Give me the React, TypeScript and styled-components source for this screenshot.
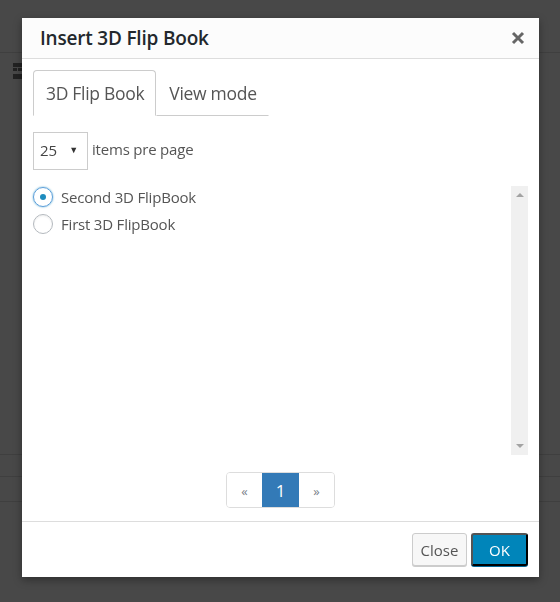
import React, { useState } from "react";
import styled, { createGlobalStyle } from "styled-components";

const GlobalStyle = createGlobalStyle`
  html, body {
    margin: 0;
    padding: 0;
    width: 560px;
    height: 602px;
    overflow: hidden;
    background: #484848;
    font-family: "Open Sans", "Noto Sans", sans-serif;
  }
  * { box-sizing: border-box; }
`;

// the admin page behind the modal overlay
const Backdrop = styled.div`
  width: 560px;
  height: 602px;
  background: #484848;
  display: flex;
  flex-direction: column;
`;

const BackRow = styled.div<{ $h: number; $line?: boolean }>`
  height: ${(p) => p.$h}px;
  border-top: 1px solid ${(p) => (p.$line ? "#3f3f3f" : "transparent")};
  flex-shrink: 0;
  padding: 10px 0 0 13px;
`;

const BackIcon = styled.div`
  width: 9px;
  height: 16px;
  border-top: 4px solid #222;
  border-bottom: 5px solid #222;
  position: relative;
  &::after {
    content: "";
    position: absolute;
    left: 0;
    right: 0;
    top: 1px;
    height: 3px;
    background: linear-gradient(90deg, #222 40%, transparent 40%, transparent 60%, #222 60%);
  }
`;

const Modal = styled.div`
  position: fixed;
  left: 22px;
  top: 18px;
  width: 517px;
  height: 559px;
  background: #fff;
  box-shadow: 0 3px 8px rgba(0, 0, 0, 0.35);
  display: flex;
  flex-direction: column;
`;

const Header = styled.div`
  height: 41px;
  background: #fcfcfc;
  border-bottom: 1px solid #dddddd;
  display: flex;
  align-items: center;
  justify-content: space-between;
  padding: 0 14px 0 18px;
`;

const Title = styled.h1`
  margin: 0;
  font-size: 19px;
  font-weight: 600;
  color: #23282d;
  letter-spacing: -0.2px;
`;

const CloseX = styled.button`
  border: 0;
  background: none;
  padding: 0;
  width: 14px;
  height: 14px;
  cursor: pointer;
  display: flex;
`;

const Body = styled.div`
  flex: 1;
  padding: 11px 11px 0;
  display: flex;
  flex-direction: column;
`;

const Tabs = styled.div`
  display: flex;
  align-self: flex-start;
`;

const Tab = styled.div<{ $active?: boolean }>`
  height: 46px;
  padding: 0 11px 0 12px;
  display: flex;
  align-items: center;
  font-size: 17.5px;
  color: #555;
  letter-spacing: -0.3px;
  border: 1px solid ${(p) => (p.$active ? "#ccc" : "transparent")};
  border-bottom: 1px solid ${(p) => (p.$active ? "transparent" : "#ccc")};
  border-radius: ${(p) => (p.$active ? "4px 4px 0 0" : "0")};
  cursor: pointer;
`;

const PerPage = styled.div`
  margin-top: 16px;
  display: flex;
  align-items: center;
  gap: 4px;
  font-size: 15px;
  color: #555;
  letter-spacing: -0.2px;
`;

const PerPageLabel = styled.span`
  padding-bottom: 4px;
`;

const Select = styled.div`
  width: 55px;
  height: 38px;
  border: 1px solid #ccc;
  display: flex;
  align-items: center;
  justify-content: space-between;
  padding: 0 9px 3px 6px;
  font-size: 15px;
  color: #444;
`;

const Caret = styled.span`
  font-size: 9px;
  color: #333;
`;

const ListBox = styled.div`
  margin-top: 16px;
  height: 269px;
  display: flex;
`;

const Items = styled.div`
  flex: 1;
  display: flex;
  flex-direction: column;
  gap: 7px;
  padding-top: 1px;
`;

const Item = styled.label`
  display: flex;
  align-items: center;
  gap: 8px;
  font-size: 15px;
  color: #555;
  letter-spacing: -0.2px;
  cursor: pointer;
  height: 20px;
`;

const Radio = styled.span<{ $checked?: boolean }>`
  width: 20px;
  height: 20px;
  border-radius: 50%;
  border: 1px solid ${(p) => (p.$checked ? "#5b9dd9" : "#b4b9be")};
  box-shadow: ${(p) =>
    p.$checked ? "0 0 2px rgba(30,140,190,.8)" : "inset 0 1px 2px rgba(0,0,0,.07)"};
  display: flex;
  align-items: center;
  justify-content: center;
  &::after {
    content: "";
    width: 6px;
    height: 6px;
    border-radius: 50%;
    background: ${(p) => (p.$checked ? "#1e8cbe" : "transparent")};
  }
`;

const Scrollbar = styled.div`
  width: 17px;
  background: #f0f0f0;
  display: flex;
  flex-direction: column;
  justify-content: space-between;
  align-items: center;
  padding: 7px 0 7px;
`;

const Arrow = styled.span<{ $down?: boolean }>`
  width: 0;
  height: 0;
  border-left: 4px solid transparent;
  border-right: 4px solid transparent;
  ${(p) =>
    p.$down ? "border-top: 4px solid #a3a3a3;" : "border-bottom: 4px solid #a3a3a3;"}
`;

const Pager = styled.div`
  margin-top: 17px;
  align-self: center;
  display: flex;
  border: 1px solid #ddd;
  border-radius: 4px;
  overflow: hidden;
  height: 36px;
`;

const PageCell = styled.div<{ $active?: boolean; $w: number }>`
  width: ${(p) => p.$w}px;
  display: flex;
  align-items: center;
  justify-content: center;
  font-size: ${(p) => (p.$active ? "17px" : "13px")};
  color: ${(p) => (p.$active ? "#fff" : "#7a7f8a")};
  background: ${(p) => (p.$active ? "#337ab7" : "#fff")};
  margin: ${(p) => (p.$active ? "-1px 0" : "0")};
  padding-top: ${(p) => (p.$active ? "0" : "2px")};
`;

const Footer = styled.div`
  height: 56px;
  border-top: 1px solid #ddd;
  display: flex;
  justify-content: flex-end;
  align-items: flex-start;
  gap: 4px;
  padding: 11px 11px 0;
`;

const Button = styled.button<{ $primary?: boolean }>`
  height: 33px;
  width: ${(p) => (p.$primary ? "57px" : "55px")};
  padding: 0;
  border-radius: 3px;
  font-family: inherit;
  font-size: 15px;
  cursor: pointer;
  color: ${(p) => (p.$primary ? "#fff" : "#555")};
  background: ${(p) => (p.$primary ? "#0085ba" : "#f7f7f7")};
  border: 1px solid ${(p) => (p.$primary ? "#0073aa #006799 #006799" : "#ccc")};
  box-shadow: ${(p) => (p.$primary ? "0 1px 0 #006799" : "0 1px 0 #ccc")};
`;

const books = ["Second 3D FlipBook", "First 3D FlipBook"];

const App: React.FC = () => {
  const [tab, setTab] = useState(0);
  const [picked, setPicked] = useState(0);

  return (
    <>
      <GlobalStyle />
      <Backdrop>
        <BackRow $h={52} />
        <BackRow $h={402} $line>
          <BackIcon />
        </BackRow>
        <BackRow $h={22} $line />
        <BackRow $h={25} $line />
        <BackRow $h={101} $line />
      </Backdrop>
      <Modal>
        <Header>
          <Title>Insert 3D Flip Book</Title>
          <CloseX aria-label="Close">
            <svg width="14" height="14" viewBox="0 0 14 14">
              <path d="M2 2 L12 12 M12 2 L2 12" stroke="#666" strokeWidth="3" />
            </svg>
          </CloseX>
        </Header>
        <Body>
          <Tabs>
            <Tab $active={tab === 0} onClick={() => setTab(0)}>
              3D Flip Book
            </Tab>
            <Tab $active={tab === 1} onClick={() => setTab(1)}>
              View mode
            </Tab>
          </Tabs>
          <PerPage>
            <Select>
              25 <Caret>▼</Caret>
            </Select>
            <PerPageLabel>items pre page</PerPageLabel>
          </PerPage>
          <ListBox>
            <Items>
              {books.map((b, i) => (
                <Item key={b} onClick={() => setPicked(i)}>
                  <Radio $checked={picked === i} />
                  {b}
                </Item>
              ))}
            </Items>
            <Scrollbar>
              <Arrow />
              <Arrow $down />
            </Scrollbar>
          </ListBox>
          <Pager>
            <PageCell $w={35}>«</PageCell>
            <PageCell $w={37} $active>
              1
            </PageCell>
            <PageCell $w={35}>»</PageCell>
          </Pager>
        </Body>
        <Footer>
          <Button>Close</Button>
          <Button $primary>OK</Button>
        </Footer>
      </Modal>
    </>
  );
};

export default App;
